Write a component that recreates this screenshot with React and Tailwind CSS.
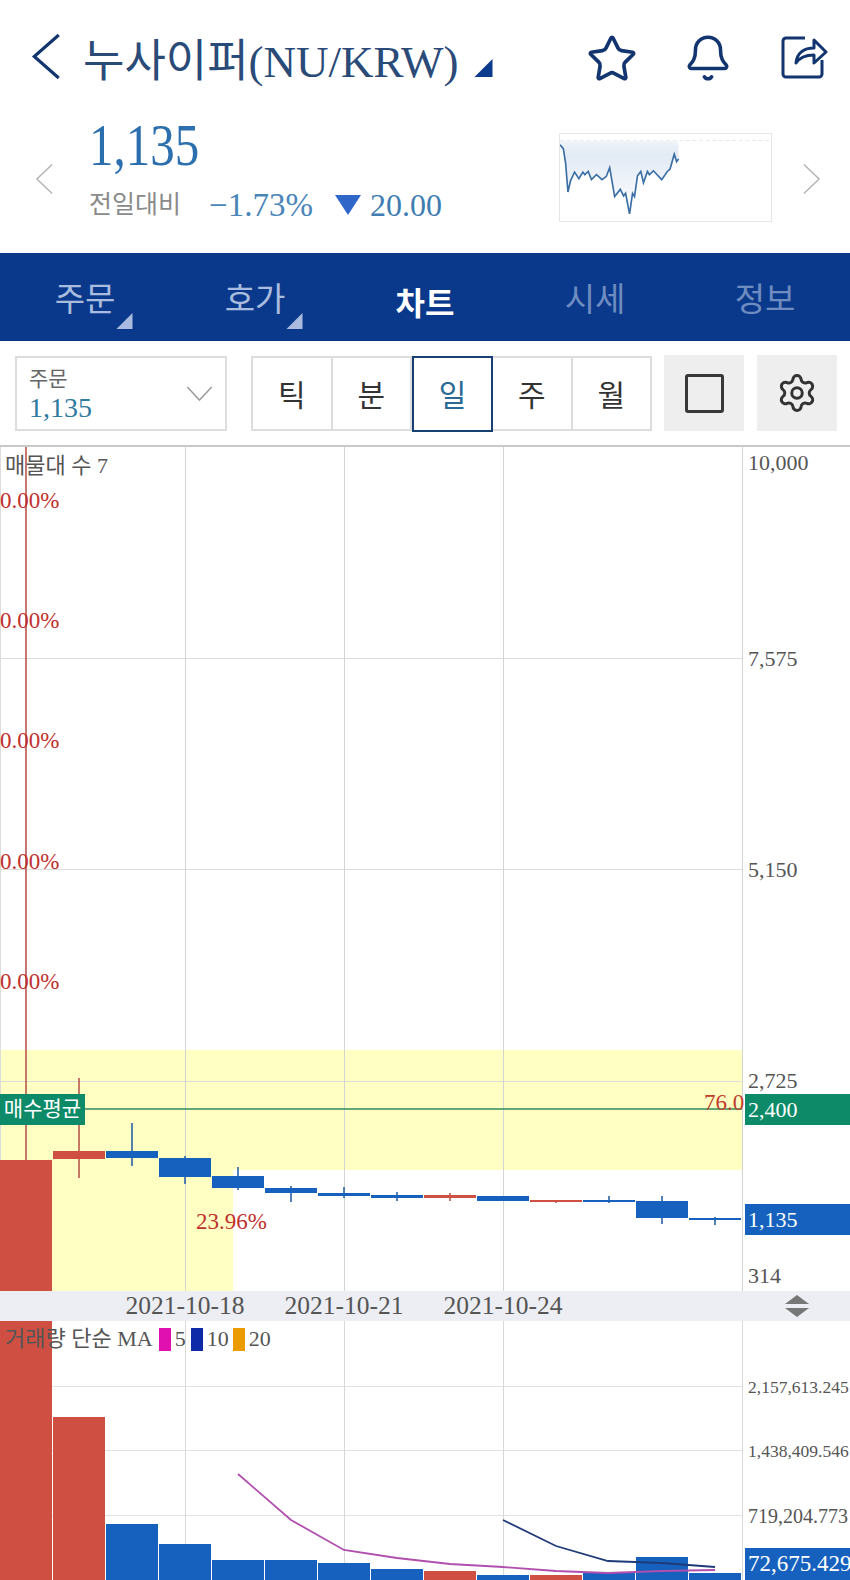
import { Star, Bell, Settings } from 'lucide-react';

const RED = '#cf4f43';
const BLUE = '#1561bd';

// x, top of body, bottom of body, wick top, wick bottom, colour
const candles = [
  [0, 1160, 1291, 447, 1160, RED, 26],
  [53, 1151, 1159, 1078, 1178, RED],
  [106, 1151, 1158, 1123, 1166, BLUE],
  [159, 1158, 1177, 1156, 1184, BLUE],
  [212, 1176, 1188, 1167, 1190, BLUE],
  [265, 1188, 1193, 1186, 1202, BLUE],
  [318, 1193, 1196, 1187, 1198, BLUE],
  [371, 1195, 1198, 1192, 1201, BLUE],
  [424, 1195, 1198, 1193, 1201, RED],
  [477, 1196, 1201, 1196, 1201, BLUE],
  [530, 1200, 1202, 1200, 1203, RED],
  [583, 1200, 1202, 1196, 1203, BLUE],
  [636, 1201, 1218, 1196, 1224, BLUE],
  [689, 1218, 1220, 1217, 1225, BLUE],
];

// x, top
const volumes = [
  [0, 1321, RED],
  [53, 1417, RED],
  [106, 1524, BLUE],
  [159, 1544, BLUE],
  [212, 1560, BLUE],
  [265, 1560, BLUE],
  [318, 1563, BLUE],
  [371, 1569, BLUE],
  [424, 1571, RED],
  [477, 1575, BLUE],
  [530, 1575, RED],
  [583, 1573, BLUE],
  [636, 1557, BLUE],
  [689, 1573, BLUE],
];

const sparkline =
  '58,73 68,85 75,130 82,218 90,183 102,157 115,177 127,157 133,165 143,155 153,180 168,165 185,180 198,170 208,143 223,232 240,210 250,230 256,222 268,285 277,222 283,232 292,168 302,155 310,190 322,155 328,165 340,153 365,180 382,155 390,148 403,102 410,125 416,117';

function Corner({ className }) {
  return (
    <svg viewBox="0 0 18 18" className={className}>
      <polygon points="18,0 18,18 0,18" fill="currentColor" />
    </svg>
  );
}

function Chevron({ points, className, width = 3 }) {
  return (
    <svg viewBox="0 0 30 48" className={className} fill="none" stroke="currentColor" strokeWidth={width}>
      <polyline points={points} />
    </svg>
  );
}

function NavTab({ label, active, dim, corner }) {
  return (
    <div className="relative flex flex-1 items-center justify-center pt-[7px]">
      <span className={active ? 'font-["Noto_Sans_CJK_KR"] text-[32px] font-bold text-white' : dim ? 'text-[33px] text-[#6f8cc0]' : 'text-[33px] text-[#a9bcdf]'}>
        {label}
      </span>
      {corner && <Corner className="absolute left-[116px] top-[60px] h-4 w-[17px] text-[#a9bcdf]" />}
    </div>
  );
}

function Period({ label, active }) {
  return (
    <div
      className={
        active
          ? 'z-10 -my-[1px] flex h-[76px] w-[81px] shrink-0 items-center justify-center border-2 border-[#173f72] bg-white pt-[4px] text-[30px] text-[#2a6a94]'
          : 'flex h-full flex-1 items-center justify-center border-r-2 border-[#dddddd] bg-white pt-[4px] text-[30px] text-[#333333] last:border-r-0'
      }
    >
      {label}
    </div>
  );
}

export default function App() {
  return (
    <div className='h-[1580px] w-[850px] overflow-hidden bg-white font-["Liberation_Serif","Noto_Sans_CJK_KR",serif]'>
      {/* header */}
      <div className="flex h-[120px] items-start pl-[31px] pr-[22px] pt-[33px] text-[#12346f]">
        <Chevron points="28,2 3,24 28,46" width={3.2} className="h-[47px] w-[30px]" />
        <div className="ml-[22px] whitespace-nowrap text-[45px] leading-[58px] text-[#2a4a78]">누사이퍼(NU/KRW)</div>
        <Corner className="ml-[15px] mt-[26px] h-[18px] w-[19px] text-[#0c3a8c]" />
        <div className="ml-auto flex items-start">
          <Star className="h-[52px] w-[52px]" strokeWidth={1.7} />
          <Bell className="ml-[45px] h-[50px] w-[50px]" strokeWidth={1.7} />
          <svg viewBox="0 0 48 46" className="ml-[47px] mt-[1px] h-[46px] w-[48px]" fill="none" stroke="currentColor" strokeWidth="3" strokeLinejoin="round">
            <path d="M25 4H6a3 3 0 0 0-3 3v33a3 3 0 0 0 3 3h33a3 3 0 0 0 3-3V26" />
            <path d="M16 29c1-10 8-15 18-15V6l12 12-12 11v-8c-8 0-14 2-18 8z" />
          </svg>
        </div>
      </div>

      {/* price row */}
      <div className="flex h-[133px] pl-[35px]">
        <Chevron points="27,1 3,24 27,47" width={2.4} className="mt-[43px] h-[32px] w-[19px] text-[#b5b5b5]" />
        <div className="ml-[35px] w-[470px]">
          <div className="origin-left scale-y-[1.2] text-[49px] leading-[52px] text-[#2c6fae]">1,135</div>
          <div className="mt-[13px] flex items-center whitespace-nowrap">
            <span className="text-[25px] leading-[40px] text-[#8a8a8a]">전일대비</span>
            <span className="ml-[28px] text-[33px] leading-[40px] text-[#4a85b8]">−1.73%</span>
            <svg viewBox="0 0 26 20" className="ml-[22px] h-[20px] w-[26px]">
              <polygon points="0,0 26,0 13,20" fill="#2f66c8" />
            </svg>
            <span className="ml-[9px] text-[32px] leading-[40px] text-[#3f7cb2]">20.00</span>
          </div>
        </div>
        <div className="mt-[13px] h-[89px] w-[213px] border border-[#e6e6e6]">
          <svg viewBox="58 40 637 267" className="h-full w-full" preserveAspectRatio="none">
            <defs>
              <linearGradient id="spark" x1="0" y1="0" x2="0" y2="1">
                <stop offset="0" stopColor="#eff3f9" />
                <stop offset="0.2" stopColor="#e2eaf4" />
                <stop offset="1" stopColor="#ffffff" />
              </linearGradient>
            </defs>
            <polygon points={`${sparkline} 416,62 58,62`} fill="url(#spark)" />
            <line x1="58" y1="60" x2="690" y2="60" stroke="#dddddd" strokeWidth="2" strokeDasharray="12 8" />
            <polyline points={sparkline} fill="none" stroke="#3a6ea5" strokeWidth="5" />
          </svg>
        </div>
        <Chevron points="3,1 27,24 3,47" width={2.4} className="ml-[30px] mt-[43px] h-[32px] w-[19px] text-[#b5b5b5]" />
      </div>

      {/* tabs */}
      <div className="flex h-[88px] bg-[#0a398b]">
        <NavTab label="주문" corner />
        <NavTab label="호가" corner />
        <NavTab label="차트" active />
        <NavTab label="시세" dim />
        <NavTab label="정보" dim />
      </div>

      {/* period controls */}
      <div className="flex h-[106px] items-start border-b-[2px] border-[#c9c9c9] pl-[15px] pt-[14px]">
        <div className="mt-[1px] flex h-[75px] w-[212px] items-center justify-between border-2 border-[#dddddd] pl-[12px] pr-[12px]">
          <div className="pt-[3px]">
            <div className="text-[21px] leading-[26px] text-[#666666]">주문</div>
            <div className="text-[28px] leading-[32px] text-[#2f7a9f]">1,135</div>
          </div>
          <svg viewBox="0 0 28 16" className="h-[15px] w-[27px] text-[#9a9a9a]" fill="none" stroke="currentColor" strokeWidth="1.6">
            <polyline points="1,1 14,15 27,1" />
          </svg>
        </div>
        <div className="ml-[24px] mt-[1px] flex h-[75px] w-[401px] items-center border-2 border-[#dddddd]">
          <Period label="틱" />
          <Period label="분" />
          <Period label="일" active />
          <Period label="주" />
          <Period label="월" />
        </div>
        <div className="ml-[12px] flex h-[76px] w-[80px] items-center justify-center bg-[#eeeeee]">
          <div className="h-[39px] w-[39px] rounded-[3px] border-[3px] border-[#383838]" />
        </div>
        <div className="ml-[13px] flex h-[76px] w-[80px] items-center justify-center bg-[#eeeeee]">
          <Settings className="h-[42px] w-[42px] text-[#333333]" strokeWidth={1.7} />
        </div>
      </div>

      {/* price chart */}
      <div className="relative h-[844px] text-[22px] text-[#555555]">
        <svg viewBox="0 447 850 844" className="absolute inset-0 h-full w-full">
          <rect x="0" y="1050" width="742" height="120" fill="#ffffc4" />
          <rect x="0" y="1170" width="233" height="121" fill="#ffffc4" />
          {[658.5, 869.5, 1081.5].map((y) => (
            <line key={y} x1="0" y1={y} x2="742" y2={y} stroke="#dcdcdc" />
          ))}
          {[185.5, 344.5, 503.5, 742.5].map((x) => (
            <line key={x} x1={x} y1="447" x2={x} y2="1291" stroke="#d4d4d4" />
          ))}
          <line x1="0.5" y1="447" x2="0.5" y2="1160" stroke="#dcdcdc" />
          {candles.map(([x, top, bottom, wickTop, wickBottom, color, wx]) => (
            <g key={x}>
              <line x1={wx ?? x + 26} y1={wickTop} x2={wx ?? x + 26} y2={wickBottom} stroke={color === RED ? '#b8574d' : '#2a62a8'} strokeWidth="1.6" />
              <rect x={x} y={top} width="52" height={bottom - top} fill={color} />
            </g>
          ))}
          <line x1="85" y1="1109" x2="742" y2="1109" stroke="#2c8a5e" strokeWidth="1.5" />
        </svg>

        <span className="absolute left-[5px] top-[18px] -translate-y-1/2 whitespace-nowrap text-[22px]">매물대 수 7</span>
        <span className="absolute left-0 top-[54px] -translate-y-1/2 text-[23px] text-[#c0302c]">0.00%</span>
        <span className="absolute left-0 top-[174px] -translate-y-1/2 text-[23px] text-[#c0302c]">0.00%</span>
        <span className="absolute left-0 top-[294px] -translate-y-1/2 text-[23px] text-[#c0302c]">0.00%</span>
        <span className="absolute left-0 top-[415px] -translate-y-1/2 text-[23px] text-[#c0302c]">0.00%</span>
        <span className="absolute left-0 top-[535px] -translate-y-1/2 text-[23px] text-[#c0302c]">0.00%</span>
        <span className="absolute left-[196px] top-[775px] -translate-y-1/2 text-[23px] text-[#c0302c]">23.96%</span>
        <span className="absolute left-[704px] top-[656px] -translate-y-1/2 text-[23px] text-[#c0402c]">76.0</span>

        <span className="absolute left-[748px] top-[15px] -translate-y-1/2">10,000</span>
        <span className="absolute left-[748px] top-[211px] -translate-y-1/2">7,575</span>
        <span className="absolute left-[748px] top-[422px] -translate-y-1/2">5,150</span>
        <span className="absolute left-[748px] top-[633px] -translate-y-1/2">2,725</span>
        <span className="absolute left-[748px] top-[828px] -translate-y-1/2">314</span>

        <div className="absolute left-0 top-[647px] flex h-[31px] w-[85px] items-center justify-center whitespace-nowrap bg-[#0d8a68] text-[21px] text-white">매수평균</div>
        <div className="absolute left-[745px] top-[647px] flex h-[31px] w-[105px] items-center bg-[#0d8a68] pl-[3px] text-white">2,400</div>
        <div className="absolute left-[745px] top-[757px] flex h-[31px] w-[105px] items-center bg-[#1561bd] pl-[3px] text-white">1,135</div>
      </div>

      {/* date axis */}
      <div className="relative h-[30px] bg-[#eceef3] text-[25.5px] text-[#555555]">
        <span className="absolute left-[185px] top-1/2 -translate-x-1/2 -translate-y-1/2">2021-10-18</span>
        <span className="absolute left-[344px] top-1/2 -translate-x-1/2 -translate-y-1/2">2021-10-21</span>
        <span className="absolute left-[503px] top-1/2 -translate-x-1/2 -translate-y-1/2">2021-10-24</span>
        <svg viewBox="0 0 24 22" className="absolute left-[785px] top-[4px] h-[22px] w-[24px] text-[#777777]">
          <polygon points="12,0 24,9 0,9" fill="currentColor" />
          <polygon points="0,13 24,13 12,22" fill="currentColor" />
        </svg>
      </div>

      {/* volume chart */}
      <div className="relative h-[259px] text-[#555555]">
        <svg viewBox="0 1321 850 259" className="absolute inset-0 h-full w-full">
          {[1386.5, 1450.5, 1515.5].map((y) => (
            <line key={y} x1="0" y1={y} x2="742" y2={y} stroke="#e2e2e2" />
          ))}
          {[185.5, 344.5, 503.5, 742.5].map((x) => (
            <line key={x} x1={x} y1="1321" x2={x} y2="1580" stroke="#d8d8d8" />
          ))}
          {volumes.map(([x, top, color]) => (
            <rect key={x} x={x} y={top} width="52" height={1580 - top} fill={color} />
          ))}
          <polyline points="238,1474 291,1520 344,1550 397,1558 450,1564 503,1567 556,1571 608,1573 662,1571 715,1570" fill="none" stroke="#b04fae" strokeWidth="1.8" />
          <polyline points="503,1520 556,1546 608,1561 662,1563 715,1567" fill="none" stroke="#1f3a78" strokeWidth="1.8" />
        </svg>

        <div className="absolute left-[5px] top-[6px] flex items-center whitespace-nowrap text-[22px] leading-[24px]">
          <span>거래량 단순 MA</span>
          <span className="ml-[6px] h-[23px] w-[12px] bg-[#e010b0]" />
          <span className="ml-[4px]">5</span>
          <span className="ml-[5px] h-[23px] w-[12px] bg-[#0f2aa8]" />
          <span className="ml-[4px]">10</span>
          <span className="ml-[4px] h-[23px] w-[12px] bg-[#eb9a00]" />
          <span className="ml-[4px]">20</span>
        </div>

        <span className="absolute left-[748px] top-[66px] -translate-y-1/2 whitespace-nowrap text-[17.5px]">2,157,613.245</span>
        <span className="absolute left-[748px] top-[130px] -translate-y-1/2 whitespace-nowrap text-[17.5px]">1,438,409.546</span>
        <span className="absolute left-[748px] top-[195px] -translate-y-1/2 whitespace-nowrap text-[20px]">719,204.773</span>
        <div className="absolute left-[745px] top-[227px] flex h-[32px] w-[105px] items-center overflow-hidden whitespace-nowrap bg-[#1561bd] pl-[3px] text-[23px] text-white">72,675.429</div>
      </div>
    </div>
  );
}
